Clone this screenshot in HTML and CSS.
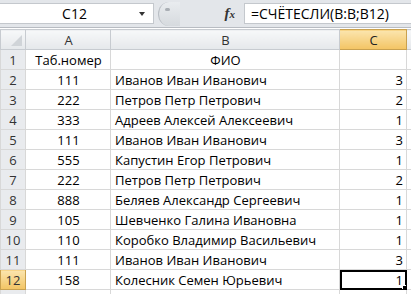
FILE: index.html
```html
<!DOCTYPE html>
<html lang="ru">
<head>
    <meta charset="UTF-8">
    <title>Excel</title>
    <link rel="stylesheet" href="styles.css">
</head>
<body>
    <div class="formula-bar">
        <div class="name-box">
            <span class="name-text">C12</span>
            <span class="drop-arrow"></span>
        </div>
        <div class="splitter"><span class="splitter-dot"></span></div>
        <div class="fx">f<span class="fx-x">x</span></div>
        <div class="formula-input">=СЧЁТЕСЛИ(B:B;B12)</div>
    </div>

    <table class="sheet">
        <colgroup>
            <col class="col-rh">
            <col class="col-a">
            <col class="col-b">
            <col class="col-c">
            <col class="col-d">
        </colgroup>
        <thead>
            <tr>
                <th class="corner"><span class="corner-tri"></span></th>
                <th>A</th>
                <th>B</th>
                <th class="active">C</th>
                <th></th>
            </tr>
        </thead>
        <tbody id="rows">
        </tbody>
    </table>

    <script>
        let data = [
            ["Таб.номер", "ФИО", ""],
            ["111", "Иванов Иван Иванович", "3"],
            ["222", "Петров Петр Петрович", "2"],
            ["333", "Адреев Алексей Алексеевич", "1"],
            ["111", "Иванов Иван Иванович", "3"],
            ["555", "Капустин Егор Петрович", "1"],
            ["222", "Петров Петр Петрович", "2"],
            ["888", "Беляев Александр Сергеевич", "1"],
            ["105", "Шевченко Галина Ивановна", "1"],
            ["110", "Коробко Владимир Васильевич", "1"],
            ["111", "Иванов Иван Иванович", "3"],
            ["158", "Колесник Семен Юрьевич", "1"]
        ];

        let tbody = document.getElementById("rows");
        data.forEach((row, i) => {
            let tr = document.createElement("tr");
            let num = i + 1;
            let isActive = num === 12;
            let fio = i === 0 ? `<td class="center">${row[1]}</td>` : `<td>${row[1]}</td>`;
            tr.innerHTML = `
                <th class="row-head${isActive ? " active" : ""}">${num}</th>
                <td class="center">${row[0]}</td>
                ${fio}
                <td class="num${isActive ? " selected" : ""}">${row[2]}${isActive ? '<span class="handle"></span>' : ""}</td>
                <td></td>
            `;
            tbody.appendChild(tr);
        });

        // empty 13th row, only its top edge is visible
        let last = document.createElement("tr");
        last.className = "stub";
        last.innerHTML = `<th class="row-head"></th><td></td><td></td><td></td><td></td>`;
        tbody.appendChild(last);
    </script>
</body>
</html>
```

FILE: styles.css
```css
body {
    margin: 0;
    padding: 0;
    font-family: "Open Sans", "Liberation Sans", Arial, sans-serif;
    font-size: 13px;
    color: #000;
    background: #fff;
    overflow: hidden;
}
.formula-bar {
    display: flex;
    align-items: center;
    height: 28px;
    background: #e3e6ea;
    border-bottom: 1px solid #b8bcc2;
    box-sizing: border-box;
}
.name-box {
    position: relative;
    width: 154px;
    height: 21px;
    background: #fff;
    border: 1px solid #c4c8cd;
    border-left: none;
    box-sizing: border-box;
    display: flex;
    align-items: center;
    justify-content: center;
}
.name-text {
    font-size: 14px;
    margin-left: -4px;
}
.drop-arrow {
    position: absolute;
    right: 8px;
    top: 8px;
    border-left: 3px solid transparent;
    border-right: 3px solid transparent;
    border-top: 4px solid #333;
}
.splitter {
    position: relative;
    width: 22px;
    height: 24px;
    margin-left: 4px;
    border-radius: 50% 0 0 50%;
    background: linear-gradient(#e9ecef, #d6dade);
    border-left: 1px solid #b9bec4;
    box-sizing: border-box;
}
.splitter-dot {
    position: absolute;
    left: 6px;
    top: 6px;
    width: 5px;
    height: 3px;
    border-radius: 2px;
    background: #a9aeb4;
}
.fx {
    width: 64px;
    text-align: right;
    padding-right: 9px;
    box-sizing: border-box;
    font-family: "Liberation Serif", serif;
    font-style: italic;
    font-weight: bold;
    font-size: 15px;
    color: #333;
}
.fx-x {
    font-size: 11px;
}
.formula-input {
    flex: 1;
    height: 21px;
    line-height: 20px;
    background: #fff;
    border: 1px solid #c4c8cd;
    border-right: none;
    box-sizing: border-box;
    padding-left: 6px;
    font-size: 14px;
}
.sheet {
    width: 436px;
    border-collapse: collapse;
    table-layout: fixed;
    margin-top: 1px;
}
.col-rh { width: 25px; }
.col-a { width: 85px; }
.col-b { width: 229px; }
.col-c { width: 67px; }
.col-d { width: 30px; }
.sheet th, .sheet td {
    height: 19px;
    padding: 0 3px 0 4px;
    border: 1px solid #d8d8d8;
    white-space: nowrap;
    overflow: hidden;
    line-height: 18px;
}
.sheet thead th {
    font-weight: normal;
    color: #333;
    background: linear-gradient(#f7f8f9, #e5e8eb);
    border: 1px solid #c7cbd0;
    text-align: center;
}
.sheet thead th.active {
    background: linear-gradient(#fbe5ae, #f3c463);
    border-color: #c9a14f;
    color: #222;
}
.corner {
    position: relative;
}
.corner-tri {
    position: absolute;
    right: 3px;
    bottom: 3px;
    border-left: 11px solid transparent;
    border-bottom: 11px solid #d0d4d8;
}
.row-head {
    font-weight: normal;
    color: #333;
    background: #e9ebee;
    border: 1px solid #c7cbd0;
    text-align: center;
}
.sheet .row-head {
    padding: 0;
}
.row-head.active {
    background: linear-gradient(#fbe5ae, #f3c463);
    border-color: #c9a14f;
}
.center {
    text-align: center;
}
.num {
    text-align: right;
}
.sheet td.selected {
    position: relative;
    outline: 2px solid #000;
    outline-offset: -2px;
}
.handle {
    position: absolute;
    right: -3px;
    bottom: -3px;
    width: 5px;
    height: 5px;
    background: #000;
    border: 1px solid #fff;
}
```
